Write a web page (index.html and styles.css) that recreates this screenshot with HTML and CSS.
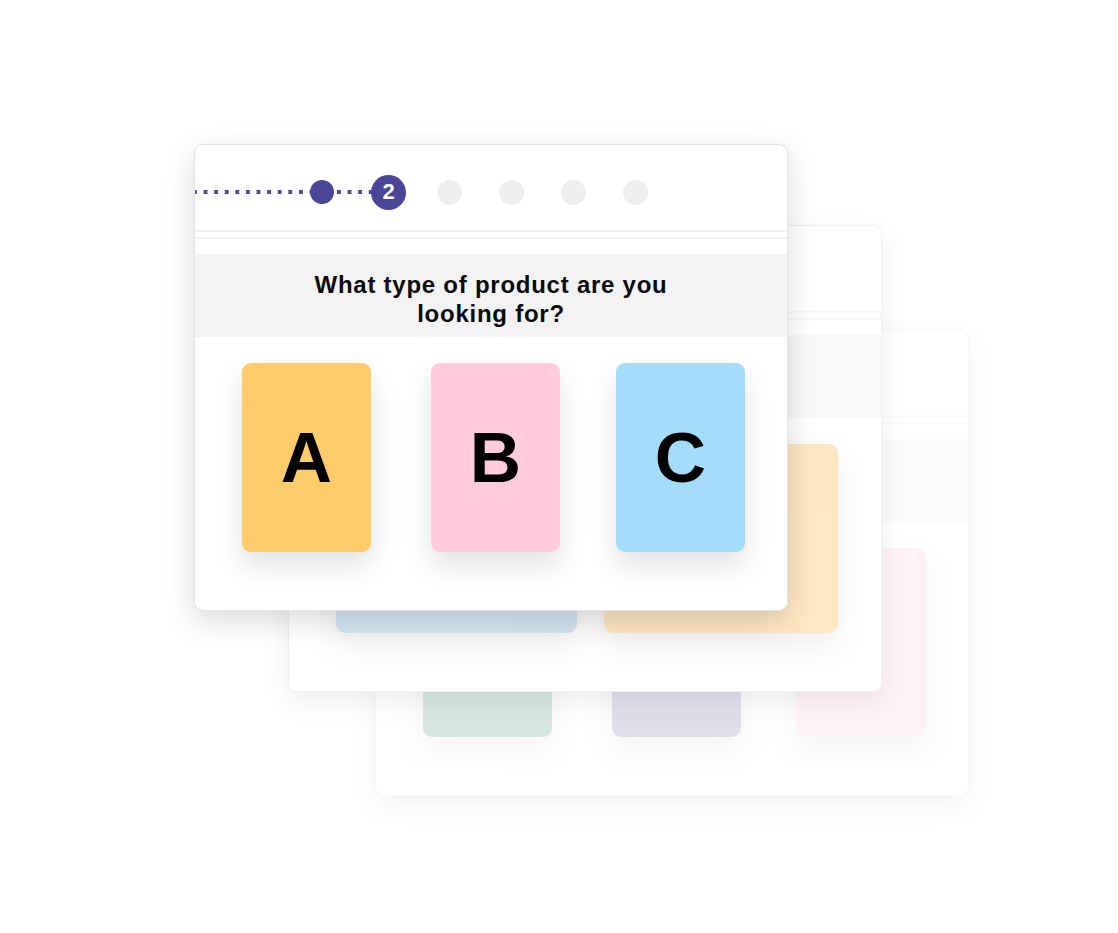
FILE: index.html
```html
<!DOCTYPE html>
<html lang="en">
<head>
<meta charset="utf-8">
<title>Product quiz</title>
<link rel="stylesheet" href="styles.css">
</head>
<body>
<div class="stage">
  <section class="window window-back" aria-hidden="true">
    <div class="window-body">
      <header class="steps">
        <span class="track track-lead"></span>
        <span class="dot dot-done"></span>
        <span class="track track-short"></span>
        <span class="dot dot-current"></span>
        <span class="dot dot-todo first"></span>
        <span class="dot dot-todo"></span>
        <span class="dot dot-todo"></span>
        <span class="dot dot-todo"></span>
      </header>
      <div class="rule"></div>
      <div class="rule"></div>
      <div class="question"></div>
      <div class="options">
        <div class="option opt-green"></div>
        <div class="option opt-purple"></div>
        <div class="option opt-rose"></div>
      </div>
    </div>
  </section>

  <section class="window window-mid" aria-hidden="true">
    <div class="window-body">
      <header class="steps">
        <span class="track track-lead"></span>
        <span class="dot dot-done"></span>
        <span class="track track-short"></span>
        <span class="dot dot-current"></span>
        <span class="dot dot-todo first"></span>
        <span class="dot dot-todo"></span>
        <span class="dot dot-todo"></span>
        <span class="dot dot-todo"></span>
      </header>
      <div class="rule"></div>
      <div class="rule"></div>
      <div class="question"></div>
      <div class="options options-wide">
        <div class="option opt-sky wide-a"></div>
        <div class="option opt-sand wide-b"></div>
      </div>
    </div>
  </section>

  <section class="window window-front">
    <div class="window-body">
      <header class="steps">
        <span class="track track-lead"></span>
        <span class="dot dot-done"></span>
        <span class="track track-short"></span>
        <span class="dot dot-current">2</span>
        <span class="dot dot-todo first"></span>
        <span class="dot dot-todo"></span>
        <span class="dot dot-todo"></span>
        <span class="dot dot-todo"></span>
      </header>
      <div class="rule"></div>
      <div class="rule"></div>
      <div class="question"><h2>What type of product are you looking for?</h2></div>
      <div class="options">
        <div class="option opt-a">A</div>
        <div class="option opt-b">B</div>
        <div class="option opt-c">C</div>
      </div>
    </div>
  </section>
</div>
</body>
</html>
```

FILE: styles.css
```css
html, body {
  margin: 0;
  padding: 0;
  background: #ffffff;
}

body {
  width: 1118px;
  height: 933px;
  overflow: hidden;
  font-family: "Liberation Sans", Arial, Helvetica, sans-serif;
  color: #0a0a0a;
}

.stage {
  position: relative;
  width: 1118px;
  height: 933px;
}

/* windows stacked on a free canvas */
.window {
  position: absolute;
  width: 594px;
  height: 467px;
  box-sizing: border-box;
  background: #ffffff;
  border: 1px solid #e4e4e4;
  border-radius: 9px;
  overflow: hidden;
  box-shadow: 0 10px 30px rgba(0, 0, 0, 0.15);
}

.window-body {
  height: 100%;
  display: flex;
  flex-direction: column;
}

.window-front {
  left: 194px;
  top: 144px;
}

.window-mid {
  left: 288px;
  top: 225px;
  border-color: #f0f0f0;
  box-shadow: 0 10px 28px rgba(0, 0, 0, 0.07);
}

.window-mid .window-body {
  opacity: 0.5;
}

.window-back {
  left: 375px;
  top: 329px;
  border-color: #f5f5f5;
  box-shadow: 0 10px 28px rgba(0, 0, 0, 0.05);
}

.window-back .window-body {
  opacity: 0.32;
}

/* stepper */
.steps {
  height: 85px;
  box-sizing: border-box;
  padding-top: 9px;
  display: flex;
  align-items: center;
  flex: 0 0 auto;
}

.track {
  height: 4px;
  background-image: linear-gradient(90deg, #4a4597 4px, transparent 4px);
  background-size: 10.6px 4px;
  background-repeat: repeat-x;
}

.track-lead {
  width: 117px;
  margin-left: -2px;
}

.track-short {
  width: 37px;
  background-position: 3px 0;
}

.dot {
  border-radius: 50%;
  flex: 0 0 auto;
}

.dot-done {
  width: 24px;
  height: 24px;
  background: #4a4597;
}

.dot-current {
  width: 35px;
  height: 35px;
  background: #4a4597;
  color: #ffffff;
  font-weight: 700;
  font-size: 22px;
  display: flex;
  align-items: center;
  justify-content: center;
}

.dot-todo {
  width: 25px;
  height: 25px;
  background: #eeeeee;
  margin-left: 37.3px;
}

.dot-todo.first {
  margin-left: 30.5px;
}

/* double rule under the stepper */
.rule {
  height: 2px;
  background: #f1f1f1;
  margin-bottom: 5px;
  flex: 0 0 auto;
}

.rule + .rule {
  margin-bottom: 15px;
}

/* question band */
.question {
  background: #f3f3f3;
  height: 83px;
  box-sizing: border-box;
  padding-top: 6px;
  display: flex;
  align-items: center;
  justify-content: center;
  flex: 0 0 auto;
}

.question h2 {
  margin: 0;
  max-width: 400px;
  text-align: center;
  font-size: 24px;
  line-height: 29px;
  letter-spacing: 0.75px;
  font-weight: 700;
  color: #0a0a0a;
}

/* answer tiles */
.options {
  display: flex;
  padding: 26px 0 0 47px;
}

.option {
  width: 129px;
  height: 189px;
  border-radius: 9px;
  box-shadow: 0 14px 28px rgba(0, 0, 0, 0.12);
  display: flex;
  align-items: center;
  justify-content: center;
  font-size: 71px;
  font-weight: 700;
  color: #000000;
  flex: 0 0 auto;
}

.option + .option {
  margin-left: 60px;
}

.option + .option + .option {
  margin-left: 56px;
}

.options-wide .option + .option {
  margin-left: 27px;
}

.opt-a { background: #ffcb6b; }
.opt-b { background: #ffcbde; }
.opt-c { background: #a3ddf9; }

.wide-a { width: 241px; }
.wide-b { width: 234px; }

.opt-sky { background: #aacde3; }
.opt-sand { background: #fdcf85; }

.opt-green { background: #83b4a2; }
.opt-purple { background: #9d9dc6; }
.opt-rose { background: #ffd9e3; }
```
